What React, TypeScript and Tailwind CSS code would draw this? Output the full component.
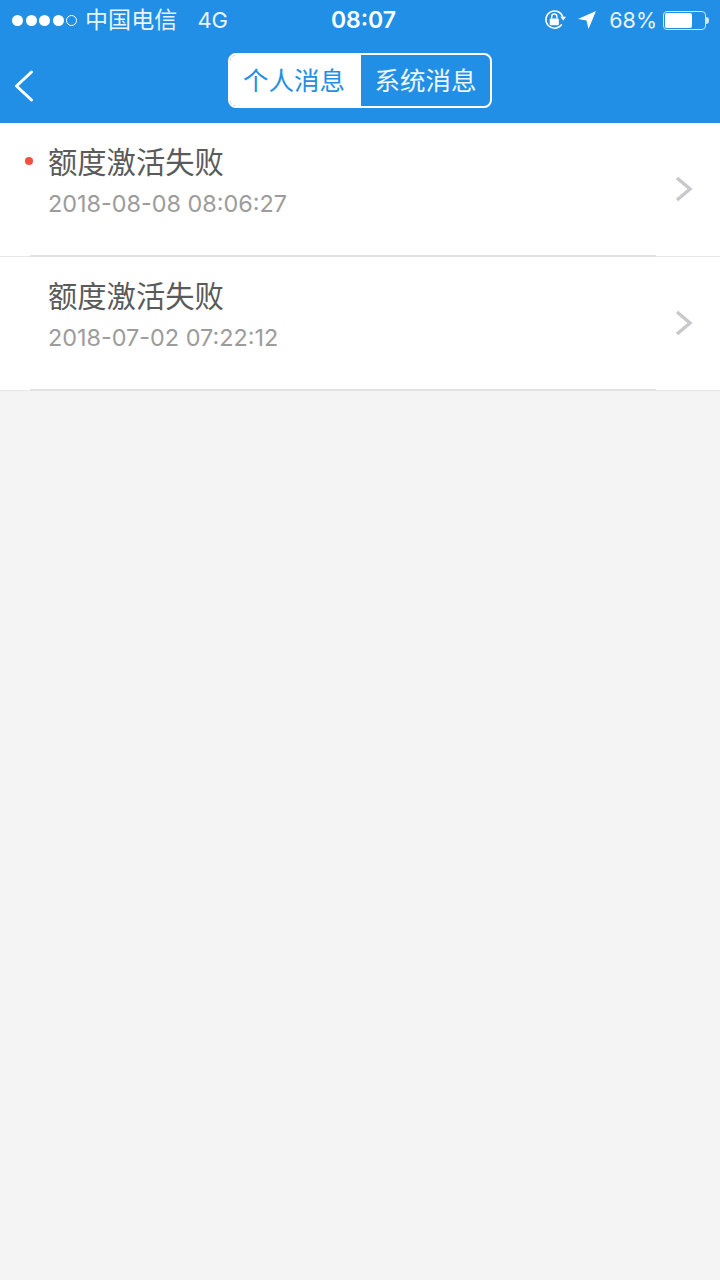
import React from "react";

const FONT = { fontFamily: 'Inter, "Noto Sans CJK SC", sans-serif' };

function Chevron() {
  return (
    <svg width="18" height="26" viewBox="0 0 18 26" fill="none">
      <path d="M2 2 L15 13 L2 24" stroke="#c8c8cd" strokeWidth="3.4" />
    </svg>
  );
}

function Row({ title, time, unread }: { title: string; time: string; unread?: boolean }) {
  return (
    <div className="h-[134px] bg-white">
      <div className="flex h-[133px] items-start pr-[27px]">
        <div className="flex w-[48px] shrink-0 justify-end pr-[15px] pt-[34px]">
          {unread && <div className="h-[8px] w-[8px] rounded-full bg-[#f5503f]" />}
        </div>
        <div className="flex-1 pt-[20px]">
          <div className="text-[29.3px] leading-[40px] text-[#5a5a5a]">{title}</div>
          <div className="mt-[3px] text-[23.4px] leading-[36px] text-[#9c9c9c]">{time}</div>
        </div>
        <div className="self-center pb-[1px]">
          <Chevron />
        </div>
      </div>
      <div className="h-px bg-[#e8e8e8]">
        <div className="ml-[30px] h-[2px] w-[626px] -translate-y-px bg-[#e2e2e2]" />
      </div>
    </div>
  );
}

export default function App() {
  return (
    <div className="flex min-h-[1280px] flex-col bg-[#f4f4f4]" style={FONT}>
      <header className="h-[123px] bg-[#228fe6] text-white">
        <div className="flex h-[40px] items-center justify-between pl-[12px] pr-[11px]">
          <div className="flex w-[300px] items-center">
            <div className="flex items-center gap-[2.5px]">
              {[0, 1, 2, 3].map((i) => (
                <span key={i} className="h-[11px] w-[11px] rounded-full bg-white" />
              ))}
              <span className="h-[11px] w-[11px] rounded-full border border-white" />
            </div>
            <span className="ml-[8px] text-[23px] leading-[30px] tracking-[0.1px] text-[#e8f3fc]">中国电信</span>
            <span className="ml-[20px] text-[22px] leading-[30px] text-[#e8f3fc]">4G</span>
          </div>
          <div className="ml-[6px] text-[23px] font-semibold leading-[30px]">08:07</div>
          <div className="flex w-[300px] items-center justify-end">
            <svg width="23" height="22" viewBox="0 0 24 22" fill="none" className="mr-[11px]">
              <path d="M18.5 15.5 A9 9 0 1 1 19.6 8" stroke="white" strokeWidth="1.6" />
              <path d="M17 7.5 L23 7.5 L20 11.5 Z" fill="white" />
              <rect x="6" y="9.5" width="9.5" height="7" rx="1" fill="white" />
              <path d="M8 9.5 V7.5 A2.7 2.7 0 0 1 13.5 7.5 V9.5" stroke="white" strokeWidth="1.5" />
            </svg>
            <svg width="18" height="18" viewBox="0 0 18 18" className="mr-[13px]">
              <path d="M18 0 L0 8 L8.5 9.5 L10.5 18 Z" fill="white" />
            </svg>
            <span className="text-[21.5px] leading-[30px] text-[#e8f3fc]">68%</span>
            <div className="ml-[6px] flex items-center">
              <div className="h-[19px] w-[43px] rounded-[4px] border border-[#cfe6f9] p-[1px]">
                <div className="h-full w-[27px] rounded-[2px] bg-white" />
              </div>
              <div className="h-[7px] w-[3px] rounded-r-full bg-[#cfe6f9]" />
            </div>
          </div>
        </div>
        <div className="relative flex h-[83px] items-start justify-center pt-[13px]">
          <svg width="22" height="34" viewBox="0 0 22 34" fill="none" className="absolute left-[13px] top-[29px]">
            <path d="M18.5 3 L3.5 17 L18.5 31" stroke="white" strokeWidth="3" strokeLinecap="round" strokeLinejoin="round" />
          </svg>
          <div className="flex h-[55px] w-[264px] overflow-hidden rounded-[8px] border-2 border-white">
            <div className="flex w-[131px] items-center justify-center bg-white pr-[3px] pt-[1px] text-[25.5px] text-[#228fe6]">个人消息</div>
            <div className="flex flex-1 items-center justify-center pt-[1px] text-[25.5px] text-[#eef6fd]">系统消息</div>
          </div>
        </div>
      </header>
      <Row title="额度激活失败" time="2018-08-08 08:06:27" unread />
      <Row title="额度激活失败" time="2018-07-02 07:22:12" />
    </div>
  );
}
